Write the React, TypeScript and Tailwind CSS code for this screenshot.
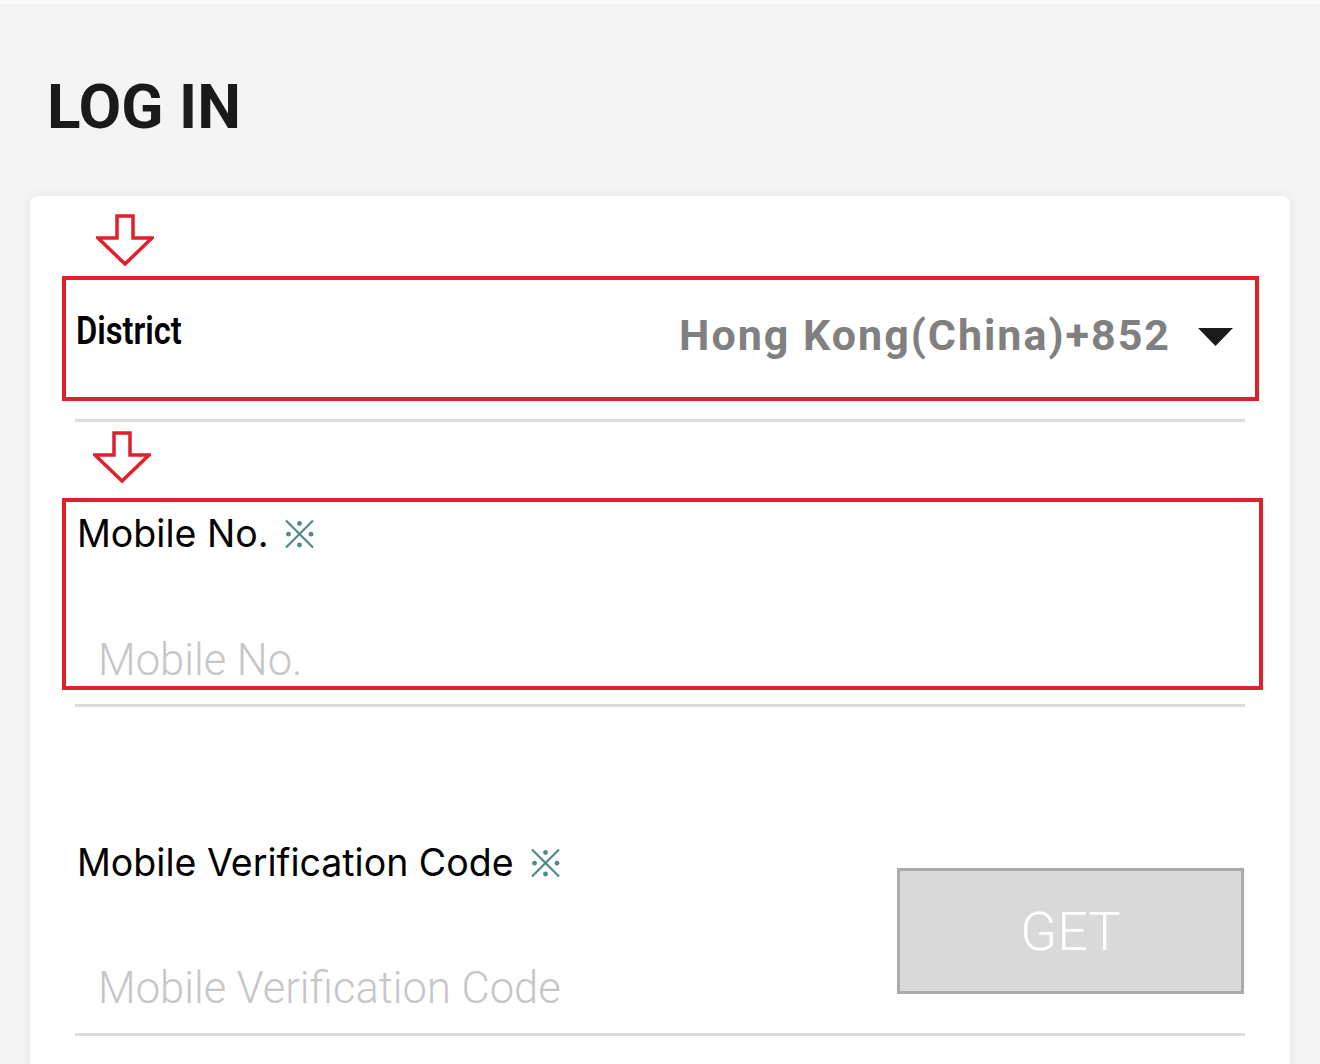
import React from "react";

const RED = "border-[#e2202c]";

const DownArrow = () => (
    <svg width="58" height="53" viewBox="0 0 58 53" fill="none">
        <path
            d="M29 50 L2 24 H21 V2 H37 V24 H56 Z"
            stroke="#e2202c"
            strokeWidth="3.5"
            strokeLinejoin="miter"
        />
    </svg>
);

const Required = () => (
    <svg width="31" height="30" viewBox="0 0 30 30" className="shrink-0">
        <path d="M1.5 1.5 L28.5 28.5 M28.5 1.5 L1.5 28.5" stroke="#4e8a8a" strokeWidth="2.2" />
        <circle cx="15" cy="4.5" r="2.4" fill="#4e8a8a" />
        <circle cx="15" cy="26" r="2.4" fill="#4e8a8a" />
        <circle cx="4" cy="15.2" r="2.4" fill="#4e8a8a" />
        <circle cx="26.5" cy="15.2" r="2.4" fill="#4e8a8a" />
    </svg>
);

const Label = ({ text }: { text: string }) => (
    <div className="flex items-center gap-4 h-[44px]">
        <span className="font-['Inter'] text-[37.5px] leading-[44px] text-black">{text}</span>
        <Required />
    </div>
);

const Placeholder = ({ text, className }: { text: string; className: string }) => (
    <div className={`${className} pl-[21px] font-['Roboto'] font-light text-[43.5px] leading-[50px] text-[#c6c6c6]`}>
        {text}
    </div>
);

const Divider = () => <div className="h-[3px] bg-[#dcdcdc] ml-[13px] mr-[14px]" />;

export default function App() {
    return (
        <div className="h-[1064px] overflow-hidden bg-[#f4f4f4] border-t-4 border-[#fbfbfb]">
            <h1 className="pl-[47px] pt-[73px] font-['Roboto'] font-bold text-[62px] leading-[60px] text-[#1a1a1a]">
                LOG IN
            </h1>

            <div className="ml-[30px] mt-[59px] w-[1260px] h-[900px] rounded-lg bg-white shadow-[0_0_12px_rgba(0,0,0,0.07)] pl-[32px] pr-[31px] pt-[18px]">
                <div className="ml-[34px]">
                    <DownArrow />
                </div>

                <div className={`mt-[9px] h-[125px] border-4 ${RED} flex items-center justify-between pl-[10px] pr-[22px]`}>
                    <span className="mb-[14px] inline-block origin-left scale-x-[0.86] font-['Roboto'] font-semibold text-[38px] text-black whitespace-nowrap">
                        District
                    </span>
                    <div className="flex items-center gap-[27px]">
                        <span className="mb-[6px] font-['Roboto'] font-bold text-[43px] text-[#808080] tracking-[2px] whitespace-nowrap">
                            Hong Kong(China)+852
                        </span>
                        <svg width="35" height="18" viewBox="0 0 35 18" className="mb-[4px]">
                            <path d="M0 0 H35 L17.5 18 Z" fill="#1a1a1a" />
                        </svg>
                    </div>
                </div>

                <div className="mt-[18px]">
                    <Divider />
                </div>

                <div className="ml-[31px] mt-[9px]">
                    <DownArrow />
                </div>

                <div className={`mt-[14px] -mr-[4px] h-[192px] border-4 ${RED} pl-[11px] pt-[10px]`}>
                    <Label text="Mobile No." />
                    <Placeholder className="mt-[80px]" text="Mobile No." />
                </div>

                <div className="mt-[14px]">
                    <Divider />
                </div>

                <div className="mt-[134px] flex justify-between pl-[15px] pr-[15px]">
                    <div>
                        <Label text="Mobile Verification Code" />
                        <Placeholder className="mt-[79px]" text="Mobile Verification Code" />
                    </div>
                    <button className="mt-[27px] w-[347px] h-[126px] bg-[#d9d9d9] border-[3px] border-[#aaaaaa] flex items-center justify-center font-['Roboto'] font-light text-[54px] text-white">
                        GET
                    </button>
                </div>

                <div className="mt-[19px]">
                    <Divider />
                </div>
            </div>
        </div>
    );
}
